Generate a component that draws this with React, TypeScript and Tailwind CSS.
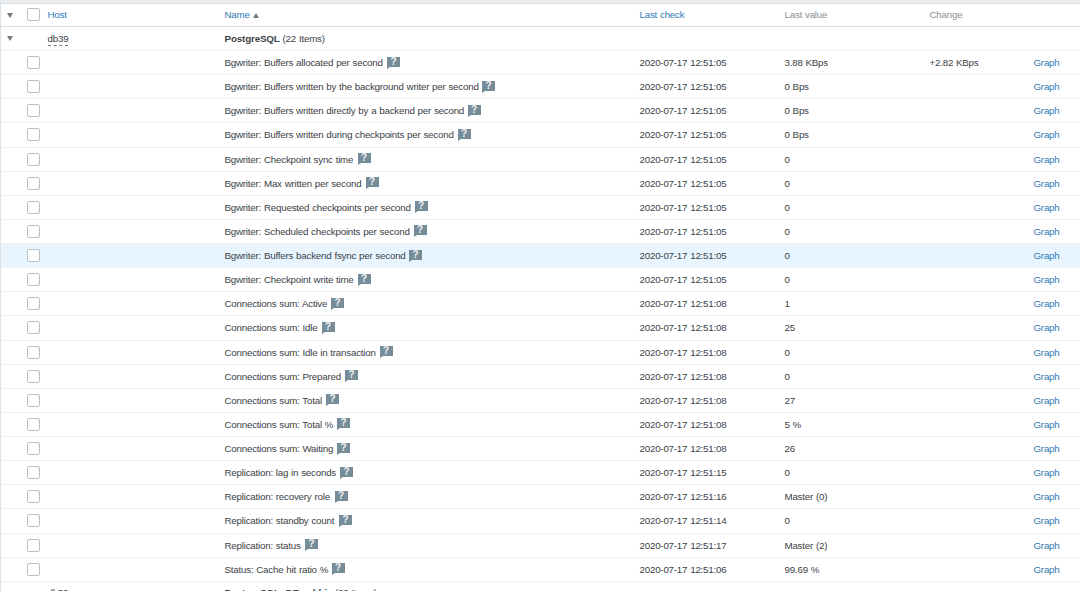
interface Item {
  name: string;
  width: number;
  check: string;
  value: string;
  change?: string;
  active?: boolean;
}

// width is the rendered length of the item name, the help icon follows it
const items: Item[] = [
  { name: 'Bgwriter: Buffers allocated per second', width: 158, check: '12:51:05', value: '3.88 KBps', change: '+2.82 KBps' },
  { name: 'Bgwriter: Buffers written by the background writer per second', width: 253, check: '12:51:05', value: '0 Bps' },
  { name: 'Bgwriter: Buffers written directly by a backend per second', width: 238.5, check: '12:51:05', value: '0 Bps' },
  { name: 'Bgwriter: Buffers written during checkpoints per second', width: 228.5, check: '12:51:05', value: '0 Bps' },
  { name: 'Bgwriter: Checkpoint sync time', width: 128.5, check: '12:51:05', value: '0' },
  { name: 'Bgwriter: Max written per second', width: 136.5, check: '12:51:05', value: '0' },
  { name: 'Bgwriter: Requested checkpoints per second', width: 185.5, check: '12:51:05', value: '0' },
  { name: 'Bgwriter: Scheduled checkpoints per second', width: 184.5, check: '12:51:05', value: '0' },
  { name: 'Bgwriter: Buffers backend fsync per second', width: 180, check: '12:51:05', value: '0', active: true },
  { name: 'Bgwriter: Checkpoint write time', width: 128.5, check: '12:51:05', value: '0' },
  { name: 'Connections sum: Active', width: 102, check: '12:51:08', value: '1' },
  { name: 'Connections sum: Idle', width: 92.5, check: '12:51:08', value: '25' },
  { name: 'Connections sum: Idle in transaction', width: 150.5, check: '12:51:08', value: '0' },
  { name: 'Connections sum: Prepared', width: 116, check: '12:51:08', value: '0' },
  { name: 'Connections sum: Total', width: 97, check: '12:51:08', value: '27' },
  { name: 'Connections sum: Total %', width: 108, check: '12:51:08', value: '5 %' },
  { name: 'Connections sum: Waiting', width: 108, check: '12:51:08', value: '26' },
  { name: 'Replication: lag in seconds', width: 111, check: '12:51:15', value: '0' },
  { name: 'Replication: recovery role', width: 105.5, check: '12:51:16', value: 'Master (0)' },
  { name: 'Replication: standby count', width: 110, check: '12:51:14', value: '0' },
  { name: 'Replication: status', width: 76, check: '12:51:17', value: 'Master (2)' },
  { name: 'Status: Cache hit ratio %', width: 102.5, check: '12:51:06', value: '99.69 %' },
];

const grid = 'grid grid-cols-[26px_20.5px_177px_415px_145px_145px_104px_1fr] items-center';

function Checkbox() {
  return <span className="block size-[13px] rounded-[2px] border border-[#b8c1c5] bg-white" />;
}

function Arrow({ up }: { up?: boolean }) {
  return (
    <svg viewBox="0 0 6 5" className="block h-[5px] w-[6px] fill-[#747c80]">
      <path d={up ? 'M3 0L6 5H0Z' : 'M0 0H6L3 5Z'} />
    </svg>
  );
}

function Help() {
  return (
    <span className="relative ml-[4.5px] block h-[12px] w-[13px] shrink-0">
      <svg viewBox="0 0 13 12" className="absolute inset-0 h-[12px] w-[13px] fill-[#768d99]">
        <path d="M0 0H13V10H3L0 12Z" />
      </svg>
      <span className="absolute inset-x-0 top-0 text-center text-[10px] leading-[10px] font-bold tracking-normal text-[#eef2f4]">?</span>
    </span>
  );
}

function GroupRow({ title, count, arrow }: { title: string; count: string; arrow?: boolean }) {
  return (
    <div className={`${grid} h-[24.5px] shrink-0 border-b border-[#f0f2f3]`}>
      <span className="pl-[6px]">{arrow && <Arrow />}</span>
      <span />
      <span className="flex">
        <span className="mt-[2px] border-b border-dashed border-[#737b80] leading-[12px]">db39</span>
      </span>
      <span className="mt-px">
        <b className="tracking-[-0.12px]">{title}</b> {count}
      </span>
    </div>
  );
}

function ItemRow({ item }: { item: Item }) {
  return (
    <div className={`${grid} h-[24.14px] shrink-0 border-b border-[#f0f2f3] ${item.active ? 'bg-[#e8f5ff]' : ''}`}>
      <span />
      <Checkbox />
      <span />
      <span className="flex items-center">
        <span className="mt-px" style={{ width: item.width }}>{item.name}</span>
        <Help />
      </span>
      <span className="mt-px">2020-07-17 {item.check}</span>
      <span className="mt-px">{item.value}</span>
      <span className="mt-px">{item.change}</span>
      <a className="mt-px text-[#2f7ab3]">Graph</a>
    </div>
  );
}

export default function App() {
  return (
    <div className="flex h-[591px] w-[1080px] flex-col overflow-hidden bg-white font-['Liberation_Sans',Arial,sans-serif] text-[9.75px] leading-[14px] tracking-[-0.21px] whitespace-nowrap text-[#3a4246] [word-spacing:0.4px]">
      <div className="h-[4px] shrink-0 border-b border-[#dce2e5] bg-[#ebeef0]" />
      <div className="flex flex-1 flex-col border-l border-[#dce2e5]">
        <div className={`${grid} h-[22.5px] shrink-0 border-b border-[#d9e0e3] text-[#2f7ab3]`}>
          <span className="pt-[2px] pl-[6px]"><Arrow /></span>
          <Checkbox />
          <span>Host</span>
          <span className="flex items-center gap-[3px]">
            Name
            <span className="pt-[2px]"><Arrow up /></span>
          </span>
          <span>Last check</span>
          <span className="text-[#8b9296]">Last value</span>
          <span className="text-[#8b9296]">Change</span>
        </div>
        <GroupRow title="PostgreSQL" count="(22 Items)" arrow />
        {items.map((item) => (
          <ItemRow key={item.name} item={item} />
        ))}
        <div className="-mt-px tracking-[-0.28px]">
          <GroupRow title="PostgreSQL: DB zabbix" count="(22 Items)" />
        </div>
      </div>
    </div>
  );
}
